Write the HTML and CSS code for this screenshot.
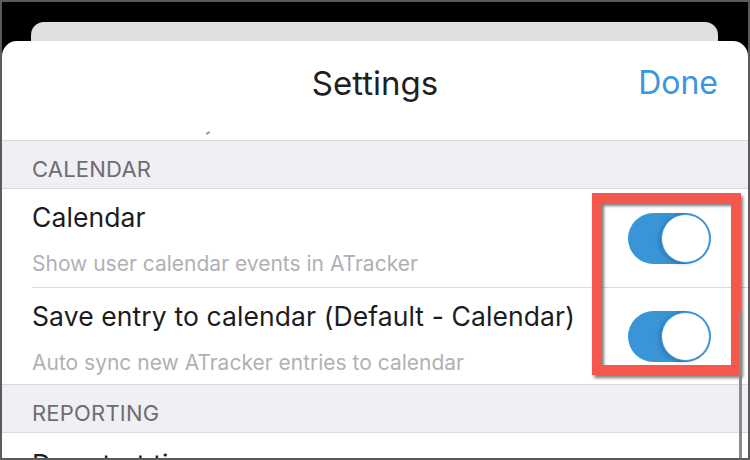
FILE: index.html
```html
<!DOCTYPE html>
<html lang="en">
<head>
  <meta charset="UTF-8">
  <title>Settings</title>
  <link rel="stylesheet" href="styles.css">
</head>
<body>

<div class="back-card"></div>

<div class="sheet">
  <header class="nav-bar">
    <span></span>
    <h1>Settings</h1>
    <a class="done" href="#">Done</a>
  </header>
  <div class="scroll-tail"><span class="tail-mark"></span></div>

  <div class="section-title">CALENDAR</div>

  <div class="row">
    <div class="row-text">
      <p class="row-title">Calendar</p>
      <p class="row-sub">Show user calendar events in ATracker</p>
    </div>
    <div class="toggle on"><span class="knob"></span></div>
  </div>

  <div class="row last">
    <div class="row-text">
      <p class="row-title">Save entry to calendar (Default - Calendar)</p>
      <p class="row-sub">Auto sync new ATracker entries to calendar</p>
    </div>
    <div class="toggle on"><span class="knob"></span></div>
  </div>

  <div class="section-title">REPORTING</div>

  <div class="row partial">
    <div class="row-text">
      <p class="row-title">Day start time</p>
    </div>
  </div>

  <!-- annotation over the two switches -->
  <div class="highlight"></div>
  <div class="scroll-bar"></div>
</div>

</body>
</html>
```

FILE: styles.css
```css
* {
  margin: 0;
  padding: 0;
  box-sizing: border-box;
}

html, body {
  height: 100%;
}

body {
  width: 750px;
  height: 460px;
  background: #000;
  border: 2px solid #5b5b5b;
  overflow: hidden;
  font-family: "Inter", "Liberation Sans", sans-serif;
  color: #1c1c1e;
}

.back-card {
  height: 19px;
  margin: 20px 30px 0 29px;
  background: #e0e0e0;
  border-radius: 13px 13px 0 0;
}

.sheet {
  position: relative;
  height: 417px;
  background: #fff;
  border-radius: 15px 15px 0 0;
  overflow: hidden;
}

.nav-bar {
  height: 86px;
  display: grid;
  grid-template-columns: 1fr auto 1fr;
  align-items: start;
  padding: 26px 30px 0;
}

.nav-bar h1 {
  font-size: 33px;
  font-weight: 400;
  line-height: 1;
  color: #1f1f1f;
}

.done {
  justify-self: end;
  font-size: 32px;
  line-height: 1;
  color: #3a96dd;
  text-decoration: none;
}

.scroll-tail {
  height: 14px;
  padding: 5px 0 0 204px;
  border-bottom: 1px solid #dadade;
}

.tail-mark {
  display: block;
  width: 4px;
  height: 2px;
  background: #9a9a9a;
  transform: rotate(-35deg);
}

.section-title {
  height: 48px;
  padding: 17px 0 0 30px;
  background: #efeff4;
  border-bottom: 1px solid #dadade;
  font-size: 22px;
  line-height: 1;
  color: #6d6d72;
  letter-spacing: 0.2px;
}

.row {
  display: flex;
  align-items: center;
  justify-content: space-between;
  margin-left: 30px;
  padding-right: 37px;
  height: 99px;
  border-bottom: 1px solid #dadade;
}

.row.last {
  height: 97px;
  margin-left: 0;
  padding-left: 30px;
}

.row.partial .row-text {
  padding-top: 18px;
}

.row-text {
  display: flex;
  flex-direction: column;
  gap: 22px;
  align-self: flex-start;
  padding-top: 15px;
}

.row-title {
  font-size: 26.5px;
  line-height: 1;
  color: #1c1c1e;
  letter-spacing: 0.1px;
}

.row-sub {
  font-size: 21px;
  line-height: 1;
  color: #b1b1b4;
}

.toggle {
  position: relative;
  width: 83px;
  height: 51px;
  border-radius: 26px;
  background: #e6e6e6;
}

.toggle.on {
  background: linear-gradient(90deg, #3994d8 55%, #2f86c8 62%, #3994d8 75%);
}

.knob {
  position: absolute;
  top: 1px;
  right: 1px;
  width: 49px;
  height: 49px;
  border-radius: 50%;
  background: #fff;
  border: 1.5px solid #3a94d8;
  box-shadow: -2px 1px 4px rgba(0, 0, 0, 0.18);
}

.highlight {
  position: absolute;
  left: 590px;
  top: 152px;
  width: 149px;
  height: 182px;
  border: 10px solid #f4574b;
  box-shadow: 2px 3px 3px rgba(0, 0, 0, 0.5), inset 2px 3px 3px rgba(0, 0, 0, 0.5);
}

.scroll-bar {
  position: absolute;
  left: 737px;
  top: 271px;
  width: 3px;
  height: 160px;
  background: #8a8a8a;
  border-radius: 2px;
}
```
